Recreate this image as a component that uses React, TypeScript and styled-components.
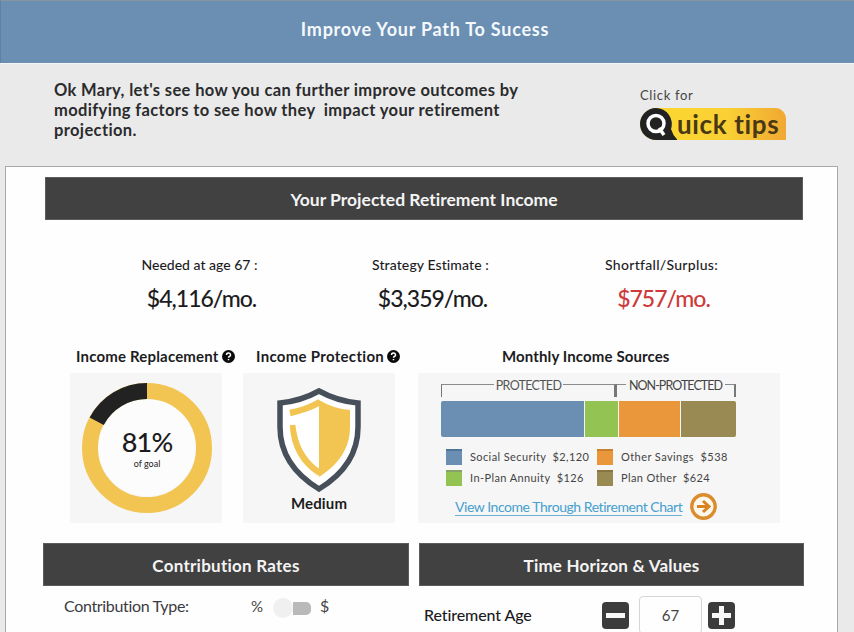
import React from "react";
import styled, { createGlobalStyle } from "styled-components";

const GlobalStyle = createGlobalStyle`
  * { box-sizing: border-box; }
  body { margin: 0; background: #eaeaea; overflow: hidden; }
`;

const Page = styled.div`
  width: 854px;
  height: 632px;
  overflow: hidden;
  background: #eaeaea;
  font-family: Lato, "Liberation Sans", sans-serif;
  font-variant-ligatures: none;
  color: #1c1c1e;
`;

const Header = styled.header`
  height: 63px;
  padding: 18px 5px 0 0;
  border-top: 1px solid #8494a3;
  border-left: 1px solid #62809f;
  background: #6a8fb3;
  color: #f5f8fb;
  text-align: center;
`;

const Label = styled.span<{ $size: number; $weight?: number; $track?: number; $line?: number; $color?: string }>`
  display: block;
  white-space: pre;
  font-size: ${(p) => p.$size}px;
  font-weight: ${(p) => p.$weight ?? 400};
  letter-spacing: ${(p) => p.$track ?? 0}px;
  line-height: ${(p) => p.$line ?? 20}px;
  color: ${(p) => p.$color ?? "inherit"};
`;

const Intro = styled.section`
  display: flex;
  justify-content: space-between;
  height: 103px;
  padding: 16px 67px 0 54px;
  border-top: 1px solid #f3f4f5;
`;

const Tips = styled.div`
  width: 147px;
  padding-top: 7px;
`;

const TipsButton = styled.div`
  display: flex;
  align-items: center;
  width: 146px;
  height: 32px;
  margin-top: 5px;
  border-radius: 16px 11px 0 16px;
  background: linear-gradient(90deg, #fbd630 20%, #fad035 60%, #f0a832);
`;

const Panel = styled.main`
  width: 833px;
  height: 480px;
  margin-left: 5px;
  padding: 10px 34px 0 37px;
  border: 1px solid #a9a9a9;
  background: #fefefe;
`;

const Bar = styled.h2`
  display: flex;
  align-items: center;
  justify-content: center;
  height: 43px;
  margin: 0;
  padding-top: 2px;
  border: 1px solid #5c5c5c;
  background: #414141;
  color: #f4f4f4;
`;

const TopBar = styled.div`
  margin-left: 2px;
`;

const Stats = styled.div`
  display: grid;
  grid-template-columns: 231px 231px 231px;
  margin: 35px 0 0 41px;
  height: 90px;
  text-align: center;
`;

const Stat = styled.div`
  display: flex;
  flex-direction: column;
  gap: 9px;
`;

const StatValue = styled.div`
  padding-left: 4px;
`;

const Cards = styled.div`
  display: grid;
  grid-template-columns: 152px 152px 364px;
  column-gap: 21px;
  margin-left: 27px;
`;

const CardColumn = styled.section<{ $indent?: number }>`
  margin-left: ${(p) => p.$indent ?? 0}px;
`;

const CardTitle = styled.div<{ $inset: number }>`
  display: flex;
  align-items: center;
  height: 28px;
  padding: 0 0 6px ${(p) => p.$inset}px;
  margin-right: -20px;
`;

const Help = styled.svg`
  width: 13px;
  height: 13px;
  flex: none;
  margin-left: 3px;
`;

const Card = styled.div`
  height: 150px;
  background: #f6f6f6;
`;

const DonutCard = styled(Card)`
  display: grid;
  place-items: center;
  > * { grid-area: 1 / 1; }
`;

const DonutText = styled.div`
  padding: 4px 0 0 2px;
  text-align: center;
`;

const ShieldCard = styled(Card)`
  display: flex;
  flex-direction: column;
  align-items: center;
  padding-top: 15px;
`;

const SourcesCard = styled(Card)`
  padding: 4px 0 0 23px;
`;

const Bracket = styled.div`
  display: flex;
  width: 295px;
  height: 20px;
`;

const Rule = styled.span<{ $width: number; $edge?: "left" | "right"; $thick?: number }>`
  width: ${(p) => p.$width}px;
  flex: none;
  height: 13px;
  margin-top: 7px;
  border-top: 1px solid #8b8b8b;
  border-left: ${(p) => (p.$edge === "left" ? 1 : 0)}px solid #777;
  border-right: ${(p) => (p.$edge === "right" ? p.$thick ?? 1 : 0)}px solid #777;
`;

const BracketLabel = styled.div<{ $width: number }>`
  display: flex;
  justify-content: center;
  flex: none;
  width: ${(p) => p.$width}px;
`;

const Stack = styled.div`
  display: flex;
  gap: 1px;
  width: 295px;
  height: 36px;
  margin-top: 4px;
  border-radius: 2px;
  overflow: hidden;
`;

const Segment = styled.span<{ $grow: number; $color: string }>`
  flex: ${(p) => p.$grow} 1 0;
  background: ${(p) => p.$color};
`;

const Legend = styled.div`
  display: grid;
  grid-template-columns: 151px 160px;
  grid-auto-rows: 21px;
  margin: 9px 0 0 5px;
`;

const LegendItem = styled.div`
  display: flex;
  align-items: center;
`;

const Swatch = styled.i<{ $color: string; $edge: string }>`
  width: 16px;
  height: 16px;
  margin-right: 8px;
  flex: none;
  border-top: 2px solid ${(p) => p.$edge};
  background: ${(p) => p.$color};
`;

const LinkRow = styled.div`
  display: flex;
  align-items: center;
  gap: 7px;
  height: 28px;
  margin: 4px 0 0 14px;
`;

const ChartLink = styled.a`
  width: 227px;
  margin-top: 2px;
  border-bottom: 1px solid #6ab0d3;
  color: #45a0cf;
`;

const Bottom = styled.div`
  display: grid;
  grid-template-columns: 366px 385px;
  column-gap: 10px;
  margin-top: 20px;
`;

const ContributionRow = styled.div`
  display: flex;
  align-items: center;
  height: 39px;
  padding-left: 21px;
`;

const FixedCell = styled.div<{ $width: number }>`
  width: ${(p) => p.$width}px;
  flex: none;
`;

const Toggle = styled.div`
  display: flex;
  align-items: center;
  width: 38px;
  height: 22px;
  margin: 5px 9px 0 0;
`;

const Knob = styled.span`
  width: 20px;
  height: 20px;
  border-radius: 50%;
  background: #f0f0f0;
`;

const Track = styled.span`
  width: 18px;
  height: 13px;
  border-radius: 0 5px 5px 0;
  background: #b9b9b9;
`;

const AgeRow = styled.div`
  display: flex;
  align-items: center;
  height: 40px;
  margin-top: 9px;
  padding-left: 5px;
`;

const Step = styled.button`
  display: grid;
  place-items: center;
  width: 27px;
  height: 27px;
  padding: 0;
  border: 0;
  border-radius: 4px;
  background: #3c3c3c;
`;

const AgeBox = styled.div`
  display: grid;
  place-items: center;
  width: 63px;
  height: 38px;
  margin: 0 6px 0 10px;
  border: 1px solid #d5d5d5;
  border-radius: 4px;
  color: #444;
`;

const HelpIcon = () => (
  <Help viewBox="0 0 14 14">
    <circle cx="7" cy="7" r="7" fill="#0b0b0b" />
    <path d="M4.8 5.3a2.2 2 0 1 1 3.2 1.7q-1 .5-1 1.3M7 9.7v1.3" fill="none" stroke="#fff" strokeWidth="1.6" />
  </Help>
);

const STATS = [
  { label: "Needed at age 67 :", value: "$4,116/mo.", track: 0 },
  { label: "Strategy Estimate :", value: "$3,359/mo.", track: 0.1 },
  { label: "Shortfall/Surplus:", value: "$757/mo.", track: 0.3, color: "#cd3a3a" },
];

const SOURCES = [
  { name: "Social Security  $2,120", grow: 143, color: "#6a8fb3", edge: "#4f759b", track: 0.4 },
  { name: "Other Savings  $538", grow: 61, color: "#ea973c", edge: "#c9802e", track: 0.43 },
  { name: "In-Plan Annuity  $126", grow: 33, color: "#93c352", edge: "#87a266", track: 0.4 },
  { name: "Plan Other  $624", grow: 55, color: "#998a54", edge: "#87743e", track: 0.36 },
];

const STACK_ORDER = [SOURCES[0], SOURCES[2], SOURCES[1], SOURCES[3]];

export default function App() {
  return (
    <Page>
      <GlobalStyle />
      <Header>
        <Label $size={18} $weight={700} $track={0.75}>Improve Your Path To Sucess</Label>
      </Header>

      <Intro>
        <Label $size={16.5} $weight={700} $track={0.36} $color="#2b2b2d">
          {"Ok Mary, let's see how you can further improve outcomes by\nmodifying factors to see how they  impact your retirement\nprojection."}
        </Label>
        <Tips>
          <Label $size={13} $track={0.65} $line={16} $color="#444">Click for</Label>
          <TipsButton>
            <svg width="37" height="32" viewBox="0 0 37 32">
              <path d="M16 0a16 16 0 0 1 15 21q2 7 7 11H16A16 16 0 0 1 16 0Z" fill="#232222" />
              <circle cx="16" cy="15.5" r="8" fill="none" stroke="#fff" strokeWidth="3.5" />
              <path d="M19 20l5 7" stroke="#fff" strokeWidth="3.5" />
            </svg>
            <Label $size={26} $weight={700} $track={0.65} $line={32} $color="#493816">uick tips</Label>
          </TipsButton>
        </Tips>
      </Intro>

      <Panel>
        <TopBar>
          <Bar>
            <Label $size={17.5} $weight={700}>Your Projected Retirement Income</Label>
          </Bar>
        </TopBar>

        <Stats>
          {STATS.map((s) => (
            <Stat key={s.label}>
              <Label $size={14} $weight={500} $track={s.track}>{s.label}</Label>
              <StatValue>
                <Label $size={23} $weight={500} $track={-1} $line={28} $color={s.color}>{s.value}</Label>
              </StatValue>
            </Stat>
          ))}
        </Stats>

        <Cards>
          <CardColumn>
            <CardTitle $inset={6}>
              <Label $size={15} $weight={700} $track={0.18}>Income Replacement</Label>
              <HelpIcon />
            </CardTitle>
            <DonutCard>
              <svg width="132" height="134" viewBox="0 0 132 134">
                <circle cx="67" cy="66" r="49" fill="#fcfcfc" />
                <circle cx="67" cy="67" r="57" fill="none" stroke="#f2c553" strokeWidth="16" />
                <path d="M16.7 40.2A57 57 0 0 1 67 10" fill="none" stroke="#222" strokeWidth="16" />
              </svg>
              <DonutText>
                <Label $size={27} $weight={500} $track={-0.8} $line={28}>81%</Label>
                <Label $size={9} $line={16}>of goal</Label>
              </DonutText>
            </DonutCard>
          </CardColumn>

          <CardColumn>
            <CardTitle $inset={13}>
              <Label $size={15} $weight={700} $track={0.3}>Income Protection</Label>
              <HelpIcon />
            </CardTitle>
            <ShieldCard>
              <svg width="84" height="105" viewBox="0 0 84 105">
                <path d="M42 3Q60 13 81 15V39C81 67 65 87 42 101C19 87 3 67 3 39V15Q24 13 42 3Z" fill="#fff" stroke="#47505a" strokeWidth="5.5" />
                <path d="M42 12Q57 21 73 22V39C73 61 61 77 42 89Z" fill="#f2c553" />
                <path d="M13 25Q29 22 43 14M16 37C17 57 26 74 43 85" fill="none" stroke="#f2c553" strokeWidth="6.5" />
                <path d="M13 29L41 20V80C28 70 20 55 18 34Z" fill="#fff" />
              </svg>
              <Label $size={15} $weight={700} $line={20} $track={0.15}>Medium</Label>
            </ShieldCard>
          </CardColumn>

          <CardColumn $indent={2}>
            <CardTitle $inset={84}>
              <Label $size={15} $weight={700} $track={0.12}>Monthly Income Sources</Label>
            </CardTitle>
            <SourcesCard>
              <Bracket>
                <Rule $width={53} $edge="left" />
                <BracketLabel $width={69}>
                  <Label $size={12.5} $line={17} $track={-0.7} $color="#555">PROTECTED</Label>
                </BracketLabel>
                <Rule $width={54} $edge="right" $thick={3} />
                <Rule $width={9} />
                <BracketLabel $width={99}>
                  <Label $size={12.5} $line={17} $track={-0.95} $color="#444">NON-PROTECTED</Label>
                </BracketLabel>
                <Rule $width={11} $edge="right" $thick={2} />
              </Bracket>
              <Stack>
                {STACK_ORDER.map((s) => (
                  <Segment key={s.name} $grow={s.grow} $color={s.color} />
                ))}
              </Stack>
              <Legend>
                {SOURCES.map((s) => (
                  <LegendItem key={s.name}>
                    <Swatch $color={s.color} $edge={s.edge} />
                    <Label $size={11} $track={s.track} $color="#444">{s.name}</Label>
                  </LegendItem>
                ))}
              </Legend>
              <LinkRow>
                <ChartLink>
                  <Label $size={14} $line={16} $track={-0.45}>View Income Through Retirement Chart</Label>
                </ChartLink>
                <svg width="29" height="27" viewBox="0 0 29 27">
                  <circle cx="14.5" cy="13.5" r="11.7" fill="#fdf8ee" stroke="#db8c2d" strokeWidth="3.4" />
                  <path d="M8 13.5h11M14 8l6 5.5-6 5.5" fill="none" stroke="#d98222" strokeWidth="3" />
                </svg>
              </LinkRow>
            </SourcesCard>
          </CardColumn>
        </Cards>

        <Bottom>
          <section>
            <Bar>
              <Label $size={17} $weight={700} $track={0.25}>Contribution Rates</Label>
            </Bar>
            <ContributionRow>
              <FixedCell $width={187}>
                <Label $size={16} $track={-0.33} $color="#3b3b3f">Contribution Type:</Label>
              </FixedCell>
              <FixedCell $width={22}>
                <Label $size={15} $color="#444">%</Label>
              </FixedCell>
              <Toggle>
                <Knob />
                <Track />
              </Toggle>
              <Label $size={16} $color="#444">$</Label>
            </ContributionRow>
          </section>
          <section>
            <Bar>
              <Label $size={17} $weight={700} $track={0.2}>Time Horizon &amp; Values</Label>
            </Bar>
            <AgeRow>
              <FixedCell $width={178}>
                <Label $size={16} $weight={500} $track={-0.1}>Retirement Age</Label>
              </FixedCell>
              <Step aria-label="Decrease">
                <svg width="19" height="19" viewBox="0 0 19 19">
                  <path d="M0 9.5h19" stroke="#f7f7f7" strokeWidth="5" />
                </svg>
              </Step>
              <AgeBox>
                <Label $size={15} $line={22}>67</Label>
              </AgeBox>
              <Step aria-label="Increase">
                <svg width="19" height="19" viewBox="0 0 19 19">
                  <path d="M0 9.5h19M9.5 0v19" stroke="#f7f7f7" strokeWidth="5" />
                </svg>
              </Step>
            </AgeRow>
          </section>
        </Bottom>
      </Panel>
    </Page>
  );
}
